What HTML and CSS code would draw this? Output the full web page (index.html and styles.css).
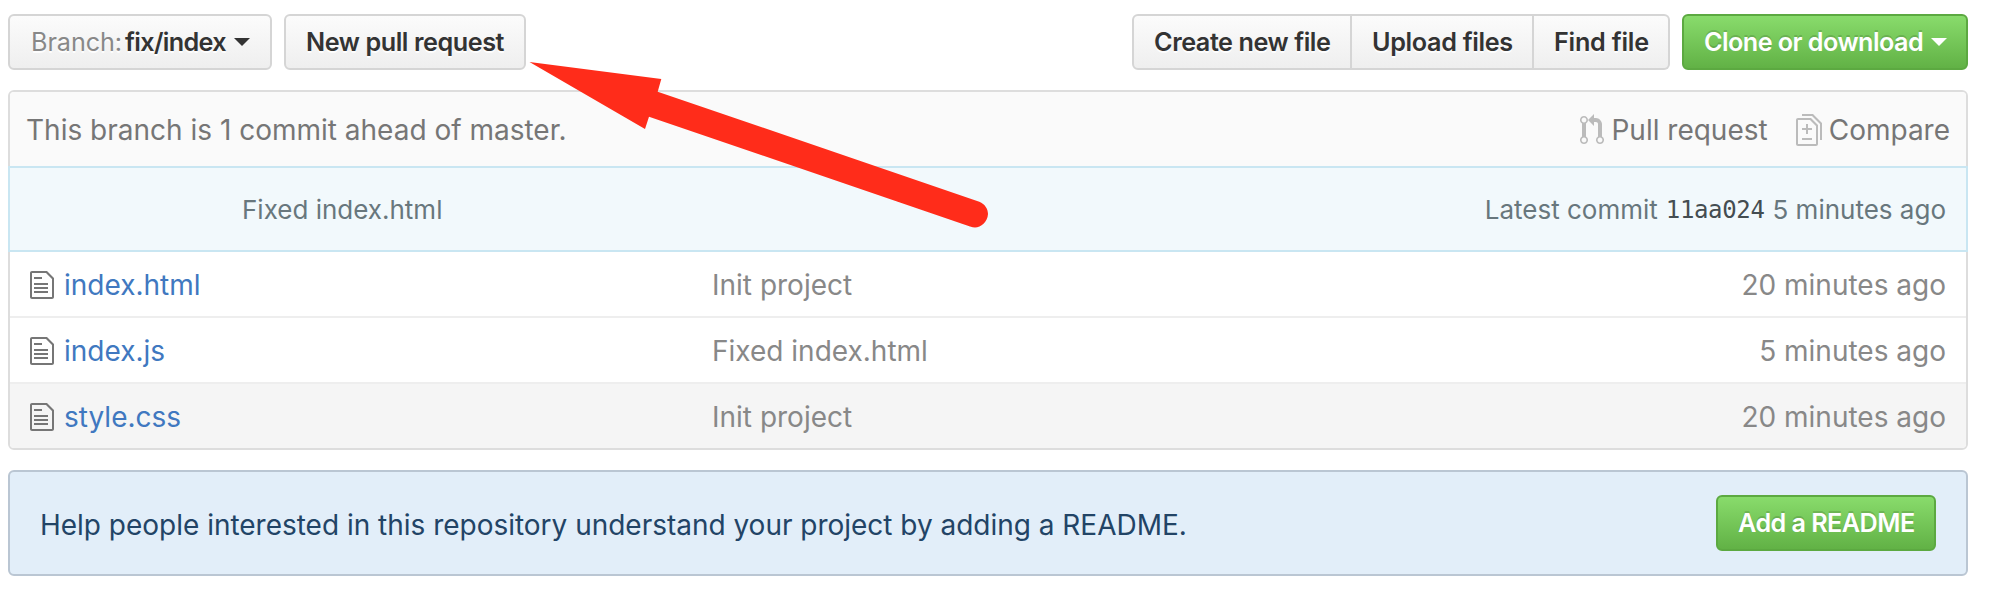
FILE: index.html
```html
<!DOCTYPE html>
<html lang="en">
<head>
<meta charset="utf-8">
<title>Repository files</title>
<link rel="stylesheet" href="styles.css">
</head>
<body>
<svg class="defs" width="0" height="0" aria-hidden="true">
  <symbol id="file-text" viewBox="0 0 12 16"><path d="M6 5H2V4h4v1zM2 8h7V7H2v1zm0 2h7V9H2v1zm0 2h7v-1H2v1zm10-7.500V14c0 .55-.45 1-1 1H1c-.55 0-1-.45-1-1V2c0-.55.45-1 1-1h7.500L12 4.500zM11 5L8 2H1v12h10V5z"/></symbol>
</svg>
<main class="page">
  <div class="toolbar">
    <button class="btn branch"><span class="label">Branch:</span> <span class="name">fix/index</span><i class="caret"></i></button>
    <button class="btn new-pr"><span>New pull request</span></button>
    <div class="group">
      <button class="btn create"><span>Create new file</span></button>
      <button class="btn upload"><span>Upload files</span></button>
      <button class="btn find"><span>Find file</span></button>
    </div>
    <button class="btn primary clone"><span>Clone or download</span><i class="caret"></i></button>
  </div>

  <section class="panel">
    <div class="info">
      <span class="ahead">This branch is 1 commit ahead of master.</span>
      <a class="action pull"><svg width="24" height="32" viewBox="0 0 12 16"><path d="M11 11.280V5c-.03-.78-.34-1.470-.94-2.060C9.460 2.350 8.780 2.030 8 2H7V0L4 3l3 3V4h1c.27.02.48.11.69.31.21.2.3.42.31.69v6.280A1.993 1.993 0 0 0 10 15a1.993 1.993 0 0 0 1-3.720zm-1 2.920c-.66 0-1.200-.55-1.200-1.200 0-.65.55-1.200 1.200-1.200.65 0 1.200.55 1.200 1.200 0 .65-.55 1.200-1.200 1.200zM4 3c0-1.110-.89-2-2-2a1.993 1.993 0 0 0-1 3.720v6.560A1.993 1.993 0 0 0 2 15a1.993 1.993 0 0 0 1-3.720V4.720c.59-.34 1-.98 1-1.720zm-.8 10c0 .66-.55 1.200-1.200 1.200-.65 0-1.200-.55-1.200-1.200 0-.65.55-1.200 1.200-1.200.65 0 1.200.55 1.200 1.200zM2 4.200C1.340 4.200.8 3.650.8 3c0-.65.55-1.200 1.200-1.200.65 0 1.200.55 1.200 1.200 0 .65-.55 1.200-1.200 1.200z"/></svg><span>Pull request</span></a>
      <a class="action compare"><svg width="26" height="32" viewBox="0 0 13 16"><path d="M6 7h2v1H6v2H5V8H3V7h2V5h1v2zm-3 6h5v-1H3v1zM7.500 2L11 5.500V15c0 .55-.45 1-1 1H1c-.55 0-1-.45-1-1V3c0-.55.45-1 1-1h6.500zM10 6L7 3H1v12h9V6zM8.500 0H3v1h5l4 4v8h1V4.500L8.500 0z"/></svg><span>Compare</span></a>
    </div>
    <div class="commit">
      <span class="title">Fixed index.html</span>
      <span class="latest"><span>Latest commit</span><span class="sha">11aa024</span><span>5 minutes ago</span></span>
    </div>
    <div class="row"><svg class="file" width="24" height="32"><use href="#file-text"/></svg><a class="link">index.html</a><span class="msg">Init project</span><span class="age">20 minutes ago</span></div>
    <div class="row"><svg class="file" width="24" height="32"><use href="#file-text"/></svg><a class="link">index.js</a><span class="msg">Fixed index.html</span><span class="age">5 minutes ago</span></div>
    <div class="row active"><svg class="file" width="24" height="32"><use href="#file-text"/></svg><a class="link">style.css</a><span class="msg">Init project</span><span class="age">20 minutes ago</span></div>
  </section>

  <section class="readme">
    <span class="help">Help people interested in this repository understand your project by adding a README.</span>
    <button class="btn primary add"><span>Add a README</span></button>
  </section>
</main>
<svg class="arrow" width="460" height="170" viewBox="529 61 460 170"><path d="M529.500 62L661.300 79L657.700 91.700L979.300 201.700C985 204 988 209 988 214C987.500 222 981 227.500 975 227.500Q973 227.500 970 226.500L649 116.700L645 129Z"/></svg>
</body>
</html>
```
FILE: styles.css
```css
* { box-sizing: border-box; }
body { margin: 0; background: #fff; font-family: Inter, "Liberation Sans", sans-serif; font-size: 28px; line-height: 42px; color: #333; }
.defs { position: absolute; }
.page { width: 1996px; height: 594px; padding: 14px 28px 0 8px; overflow: hidden; white-space: nowrap; }

.toolbar { display: flex; height: 56px; }
.btn { display: flex; align-items: center; height: 56px; margin: 0; padding: 0 0 1px 20px; border: 2px solid #d5d5d5; border-radius: 6px; background: linear-gradient(#fcfcfc, #eee); background-origin: border-box; color: #333; font: 600 25.2px/40px Inter, "Liberation Sans", sans-serif; letter-spacing: -0.43px; white-space: nowrap; text-shadow: 0 2px 0 rgba(255,255,255,.9); }
.branch { width: 264px; padding-left: 19px; }
.branch .label { width: 97px; margin-left: -1px; font-weight: 400; letter-spacing: -0.1px; color: #888; }
.branch .name { letter-spacing: -0.65px; }
.new-pr { width: 242px; margin-left: 12px; }
.caret { margin-left: 8px; border: 8px solid transparent; border-top-color: currentColor; border-bottom: 0; }
.group { display: flex; margin-left: auto; }
.group .btn + .btn { border-left: 0; }
.create { width: 220px; border-radius: 6px 0 0 6px; }
.upload { width: 182px; border-radius: 0; letter-spacing: -0.33px; }
.find { width: 136px; border-radius: 0 6px 6px 0; letter-spacing: -0.23px; }
.primary { border-color: #5ca941; background: linear-gradient(#8add6d, #60b044); background-origin: border-box; color: #fff; letter-spacing: -0.55px; text-shadow: 0 -2px 0 rgba(0,0,0,.15); }
.clone { width: 286px; margin-left: 12px; }

.panel { display: grid; grid-template-rows: 74px 86px 64px 66px 66px; height: 360px; margin-top: 20px; border: 2px solid #ddd; border-radius: 6px; }
.info { display: flex; align-items: center; padding: 2px 16px 0 16px; border-radius: 4px 4px 0 0; background: #fafafa; color: #767676; }
.action { display: flex; align-items: center; gap: 7px; }
.action svg { fill: #bbb; }
.pull { margin-left: auto; }
.compare { margin-left: 28px; }
.commit { display: flex; justify-content: space-between; align-items: center; margin: 0 -2px; padding: 1px 20px 0 232px; border: 2px solid #c9e6f2; background: #f2f9fc; color: #68777d; font-size: 26px; }
.latest { display: flex; align-items: center; gap: 8px; }
.sha { color: #444d51; font: 24px/40px "DejaVu Sans Mono", monospace; letter-spacing: -0.35px; }
.row { display: grid; grid-template-columns: 34px 648px 1fr auto; align-items: center; padding: 1px 20px 0; color: #888; }
.row + .row { border-top: 2px solid #eee; }
.active { border-radius: 0 0 4px 4px; background: #f5f5f5; }
.file { fill: #767676; }
.link { color: #4078c0; }

.readme { display: flex; justify-content: space-between; align-items: center; height: 106px; margin-top: 20px; padding: 0 30px; border: 2px solid #bac6d3; border-radius: 6px; background: #e2eef9; color: #246; }
.help { padding-top: 3px; letter-spacing: -0.015px; }
.add { width: 220px; padding-bottom: 1px; }

.arrow { position: absolute; left: 529px; top: 61px; fill: #ff2c1a; }
```
